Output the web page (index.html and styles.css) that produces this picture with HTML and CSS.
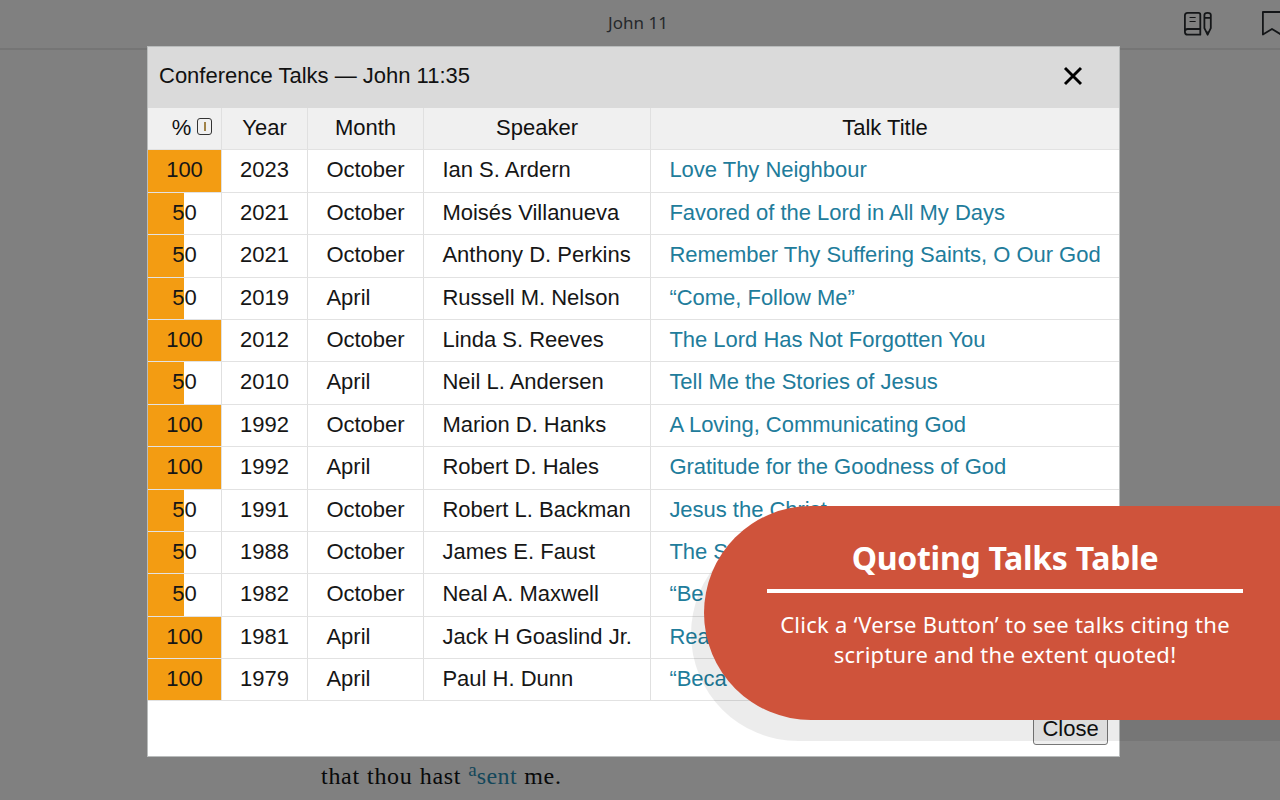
FILE: index.html
```html
<!DOCTYPE html>
<html lang="en">
<head>
<meta charset="utf-8">
<title>Conference Talks — John 11:35</title>
<link rel="stylesheet" href="styles.css">
</head>
<body>
<div class="page">
  <header class="topbar">
    <span class="chapter">John 11</span>
    <div class="tools">
      <svg class="notes-icon" width="30" height="28" viewBox="0 0 30 28" fill="none" stroke="#141618" stroke-width="1.8" stroke-linejoin="round" stroke-linecap="round">
        <path d="M4.6 2.9H15.5Q17.3 2.9 17.3 4.7V24.7H4.6Q1.9 24.7 1.9 22V5.6Q1.9 2.9 4.6 2.9ZM1.9 21.5Q2 19 4.6 19H17.3"/>
        <path d="M7 7.5H12.2M7 11.5H12.2" stroke-width="1.2"/>
        <path d="M21.4 5Q21.4 2.9 24.6 2.9Q27.8 2.9 27.8 5V18.2L24.6 24.7L21.4 18.2ZM21.4 7.8H27.8"/>
        <path d="M24 22.2H25.2L24.6 24Z" stroke-width="1.4"/>
      </svg>
      <svg class="bookmark-icon" width="18" height="28" viewBox="0 0 18 28" fill="none" stroke="#141618" stroke-width="1.8" stroke-linejoin="round">
        <path d="M0.9 2H19V24.5L10 18.9L0.9 24.5Z"/>
      </svg>
    </div>
  </header>
  <p class="verse">that thou hast <sup>a</sup><span class="ref">sent</span> me.</p>
</div>

<section class="dialog">
  <header class="dialog-head">
    <h1 class="dialog-title">Conference Talks — John 11:35</h1>
    <svg class="x-icon" width="20" height="20" viewBox="0 0 20 20" stroke="#000" stroke-width="2.9"><path d="M2 2L18 18M18 2L2 18"/></svg>
  </header>
  <div class="table">
    <div class="row head"><span class="pct">% <i class="info"></i></span><span>Year</span><span>Month</span><span>Speaker</span><span>Talk Title</span></div>
    <div class="row full"><span>100</span><span>2023</span><span>October</span><span>Ian S. Ardern</span><a>Love Thy Neighbour</a></div>
    <div class="row half"><span>50</span><span>2021</span><span>October</span><span>Moisés Villanueva</span><a>Favored of the Lord in All My Days</a></div>
    <div class="row half"><span>50</span><span>2021</span><span>October</span><span>Anthony D. Perkins</span><a>Remember Thy Suffering Saints, O Our God</a></div>
    <div class="row half"><span>50</span><span>2019</span><span>April</span><span>Russell M. Nelson</span><a>“Come, Follow Me”</a></div>
    <div class="row full"><span>100</span><span>2012</span><span>October</span><span>Linda S. Reeves</span><a>The Lord Has Not Forgotten You</a></div>
    <div class="row half"><span>50</span><span>2010</span><span>April</span><span>Neil L. Andersen</span><a>Tell Me the Stories of Jesus</a></div>
    <div class="row full"><span>100</span><span>1992</span><span>October</span><span>Marion D. Hanks</span><a>A Loving, Communicating God</a></div>
    <div class="row full"><span>100</span><span>1992</span><span>April</span><span>Robert D. Hales</span><a>Gratitude for the Goodness of God</a></div>
    <div class="row half"><span>50</span><span>1991</span><span>October</span><span>Robert L. Backman</span><a>Jesus the Christ</a></div>
    <div class="row half"><span>50</span><span>1988</span><span>October</span><span>James E. Faust</span><a>The S</a></div>
    <div class="row half"><span>50</span><span>1982</span><span>October</span><span>Neal A. Maxwell</span><a>“Be</a></div>
    <div class="row full"><span>100</span><span>1981</span><span>April</span><span>Jack H Goaslind Jr.</span><a>Rea</a></div>
    <div class="row full"><span>100</span><span>1979</span><span>April</span><span>Paul H. Dunn</span><a>“Beca</a></div>
  </div>
  <footer class="dialog-foot"><button class="close">Close</button></footer>
</section>

<div class="banner-shade"></div>
<aside class="banner">
  <h2 class="banner-title">Quoting Talks Table</h2>
  <hr class="rule">
  <p class="banner-text">Click a ‘Verse Button’ to see talks citing the<br>scripture and the extent quoted!</p>
</aside>
</body>
</html>
```
FILE: styles.css
```css
* { box-sizing: border-box; }
body {
  margin: 0;
  width: 1280px;
  height: 800px;
  overflow: hidden;
  position: relative;
  background: #808080;
  font-family: "Liberation Sans", Arial, sans-serif;
  color: #111;
}
.page { height: 800px; display: flex; flex-direction: column; justify-content: space-between; }
.topbar {
  height: 50px;
  border-bottom: 2px solid #757575;
  display: grid;
  grid-template-columns: 1fr auto 1fr;
  align-items: center;
}
.chapter { grid-column: 2; font: 17px/24px "Noto Sans", sans-serif; color: #25282b; padding: 0 4px 2px 0; }
.tools { display: flex; justify-content: flex-end; gap: 49px; }
.notes-icon, .bookmark-icon { flex: none; }
.verse { margin: 0 0 9px 321px; font: 24px/30px "Liberation Serif", serif; letter-spacing: 0.72px; word-spacing: 0.4px; color: #08090a; }
.verse sup { font-size: 19px; line-height: 0; color: #14475a; vertical-align: 8px; letter-spacing: 0; }
.ref { color: #14475a; letter-spacing: 0.4px; }

.dialog {
  position: absolute;
  left: 147px;
  top: 46px;
  width: 973px;
  height: 711px;
  background: #fff;
  border: 1px solid #b9bcbc;
  display: flex;
  flex-direction: column;
}
.dialog-head {
  height: 61px;
  flex: none;
  background: #dadada;
  display: flex;
  align-items: center;
  justify-content: space-between;
  padding: 0 36px 3px 11px;
}
.dialog-title { margin: 0; font-size: 22px; font-weight: 400; line-height: 26px; }
.table { flex: none; }
.row {
  display: grid;
  grid-template-columns: 74px 86px 116px 227px 1fr;
  height: 42.4px;
  border-bottom: 1px solid #e2e2e2;
  font-size: 22px;
  line-height: 40.6px;
  white-space: nowrap;
}
.row > * { padding-left: 18.4px; border-right: 1px solid #e0e0e0; color: #161616; }
.row > :last-child { border-right: 0; }
.row > a { color: #217c9b; letter-spacing: -0.02px; }
.row > :nth-child(-n+2) { padding: 0; text-align: center; }
.row.head { background: #f0f0f0; }
.row.head > * { padding: 0; text-align: center; color: #111; }
.full > :first-child { background: #f39c12; }
.half > :first-child { background: linear-gradient(90deg, #f39c12 36.5px, #fff 36.5px); }
.row.head > .pct { display: flex; justify-content: center; gap: 6px; padding-left: 15px; }
.info {
  width: 15px;
  height: 17px;
  border: 1.5px solid #333;
  border-radius: 3px;
  margin-top: 10px;
  display: grid;
  place-items: center;
}
.info::before { content: ""; width: 2px; height: 9px; background: #a08248; }
.dialog-foot { flex: 1; display: flex; justify-content: flex-end; align-items: flex-end; padding: 0 11px 11px; }
.close {
  width: 75px;
  height: 34px;
  padding: 1px 0 0;
  border: 1px solid #777;
  border-radius: 3px;
  background: #efefef;
  font: 22px/30px "Liberation Sans", Arial, sans-serif;
  color: #111;
}

.banner-shade {
  position: absolute;
  left: 691px;
  top: 527px;
  width: 589px;
  height: 214px;
  border-radius: 107px 0 0 107px;
  background: rgba(0, 0, 0, 0.075);
}
.banner {
  position: absolute;
  left: 704px;
  top: 506px;
  width: 576px;
  height: 214px;
  border-radius: 107px 0 0 107px;
  background: #cf533b;
  color: #fff;
  font-family: "Noto Sans", sans-serif;
  text-align: center;
  padding: 31px 37px 0 63px;
}
.banner-title { margin: 0; font-size: 32px; line-height: 42px; font-weight: 700; letter-spacing: -0.26px; }
.rule { margin: 10px 0 16px; border: 0; height: 4px; background: #fff; }
.banner-text { margin: 0; font-size: 22px; line-height: 30px; letter-spacing: 0.27px; white-space: nowrap; }
```
